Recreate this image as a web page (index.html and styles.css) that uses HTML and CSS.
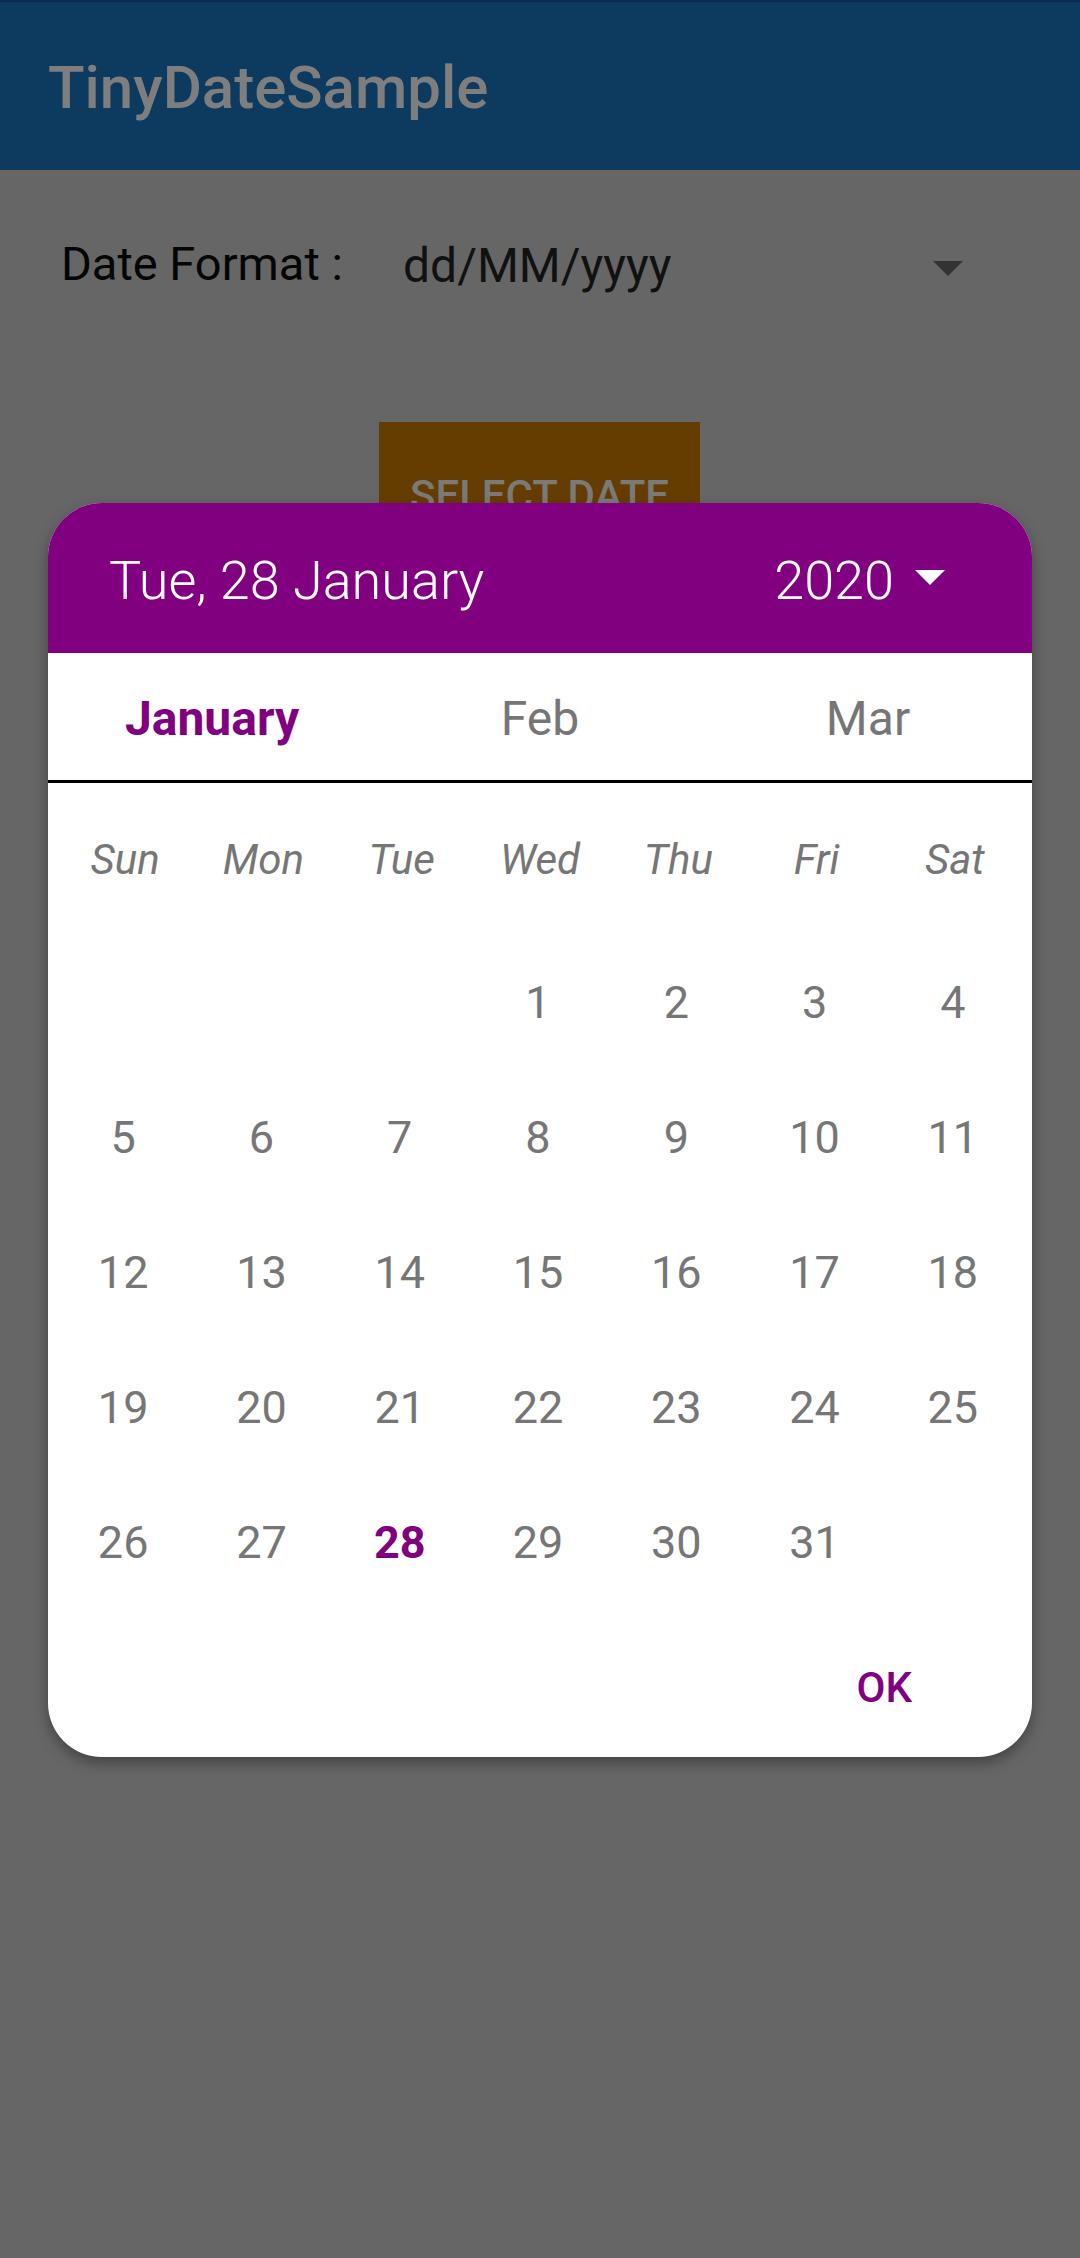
FILE: index.html
```html
<!DOCTYPE html>
<html>
<head>
<meta charset="utf-8">
<link rel="stylesheet" href="styles.css">
</head>
<body>
<div class="screen">
  <div class="statusbar"></div>
  <header class="appbar"><span class="app-title">TinyDateSample</span></header>
  <main class="content">
    <div class="format-row">
      <span class="format-label">Date Format :</span>
      <span class="format-value">dd/MM/yyyy</span>
      <svg class="spinner-arrow" width="30" height="15" viewBox="0 0 30 15"><path d="M0 0 H30 L15 15 Z" fill="#333333"/></svg>
    </div>
    <div class="button-row">
      <div class="select-btn">SELECT DATE</div>
    </div>
  </main>

  <div class="dialog">
    <div class="dlg-header">
      <span class="dlg-date">Tue, 28 January</span>
      <span class="dlg-year">2020
        <svg class="year-arrow" width="30" height="15" viewBox="0 0 30 15"><path d="M0 0 H30 L15 15 Z" fill="#ffffff"/></svg>
      </span>
    </div>
    <div class="tabs">
      <div class="tab active">January</div>
      <div class="tab">Feb</div>
      <div class="tab">Mar</div>
    </div>
    <div class="weekdays">
      <span>Sun</span><span>Mon</span><span>Tue</span><span>Wed</span><span>Thu</span><span>Fri</span><span>Sat</span>
    </div>
    <div class="days">
      <span></span><span></span><span></span><span>1</span><span>2</span><span>3</span><span>4</span>
      <span>5</span><span>6</span><span>7</span><span>8</span><span>9</span><span>10</span><span>11</span>
      <span>12</span><span>13</span><span>14</span><span>15</span><span>16</span><span>17</span><span>18</span>
      <span>19</span><span>20</span><span>21</span><span>22</span><span>23</span><span>24</span><span>25</span>
      <span>26</span><span>27</span><span class="selected">28</span><span>29</span><span>30</span><span>31</span><span></span>
    </div>
    <div class="dlg-footer">
      <span class="ok-btn">OK</span>
    </div>
  </div>
</div>
</body>
</html>
```

FILE: styles.css
```css
* { box-sizing: border-box; }
html, body {
  margin: 0;
  padding: 0;
  background: #666666;
  font-family: Roboto, "Noto Sans", "Liberation Sans", sans-serif;
}
.screen {
  position: relative;
  width: 1080px;
  height: 2258px;
  overflow: hidden;
  background: #666666;
}
.statusbar {
  height: 2px;
  background: #0b2b50;
}
.appbar {
  height: 168px;
  background: #0d3b5f;
  display: flex;
  align-items: center;
  padding: 4px 0 0 48px;
}
.app-title {
  font-size: 60px;
  font-weight: 500;
  color: #7e7e7e;
  line-height: 70px;
}
.content {
  padding: 0 0 0 61px;
}
.format-row {
  display: flex;
  align-items: center;
  height: 56px;
  margin-top: 66px;
}
.format-label {
  font-size: 47px;
  color: #050505;
  line-height: 56px;
  width: 342px;
}
.format-value {
  font-size: 48px;
  color: #111111;
  line-height: 56px;
  margin-top: 3px;
  width: 530px;
}
.spinner-arrow {
  display: block;
  margin-top: 8px;
}
.button-row {
  display: flex;
  padding-left: 318px;
  margin-top: 130px;
}
.select-btn {
  width: 321px;
  height: 144px;
  background: #663d00;
  color: #7a7a7a;
  font-size: 42px;
  font-weight: 500;
  letter-spacing: 0;
  display: flex;
  align-items: center;
  justify-content: center;
  padding-top: 2px;
}

/* dialog overlay */
.dialog {
  position: absolute;
  left: 48px;
  top: 503px;
  width: 984px;
  background: #ffffff;
  border-radius: 54px;
  overflow: hidden;
  box-shadow: 0 6px 14px rgba(0,0,0,0.35);
}
.dlg-header {
  height: 150px;
  background: #800080;
  color: #ffffff;
  display: flex;
  align-items: center;
  justify-content: space-between;
  padding: 4px 87px 0 61px;
}
.dlg-date, .dlg-year {
  font-size: 54px;
  font-weight: 300;
  line-height: 63px;
}
.dlg-year {
  display: flex;
  align-items: center;
  gap: 21px;
}
.year-arrow {
  display: block;
  margin-top: -6px;
}
.tabs {
  height: 130px;
  display: grid;
  grid-template-columns: repeat(3, 1fr);
  align-items: center;
  border-bottom: 3px solid #000000;
  padding-top: 4px;
}
.tab {
  text-align: center;
  font-size: 48px;
  color: #767676;
  line-height: 56px;
}
.tab.active {
  color: #800080;
  font-weight: 700;
}
.weekdays {
  height: 152px;
  display: grid;
  grid-template-columns: repeat(7, 1fr);
  align-items: center;
  padding: 0 8px;
}
.weekdays span {
  text-align: center;
  font-size: 42px;
  font-style: italic;
  color: #767676;
  line-height: 49px;
}
.days {
  display: grid;
  grid-template-columns: repeat(7, 1fr);
  grid-auto-rows: 135px;
  align-items: center;
  padding: 0 10px 0 6px;
}
.days span {
  text-align: center;
  font-size: 45px;
  color: #767676;
  line-height: 53px;
}
.days span.selected {
  color: #800080;
  font-weight: 700;
}
.dlg-footer {
  height: 147px;
  display: flex;
  justify-content: flex-end;
  padding: 53px 120px 0 0;
}
.ok-btn {
  font-size: 42px;
  font-weight: 500;
  color: #800080;
  line-height: 49px;
  height: 49px;
}
```
